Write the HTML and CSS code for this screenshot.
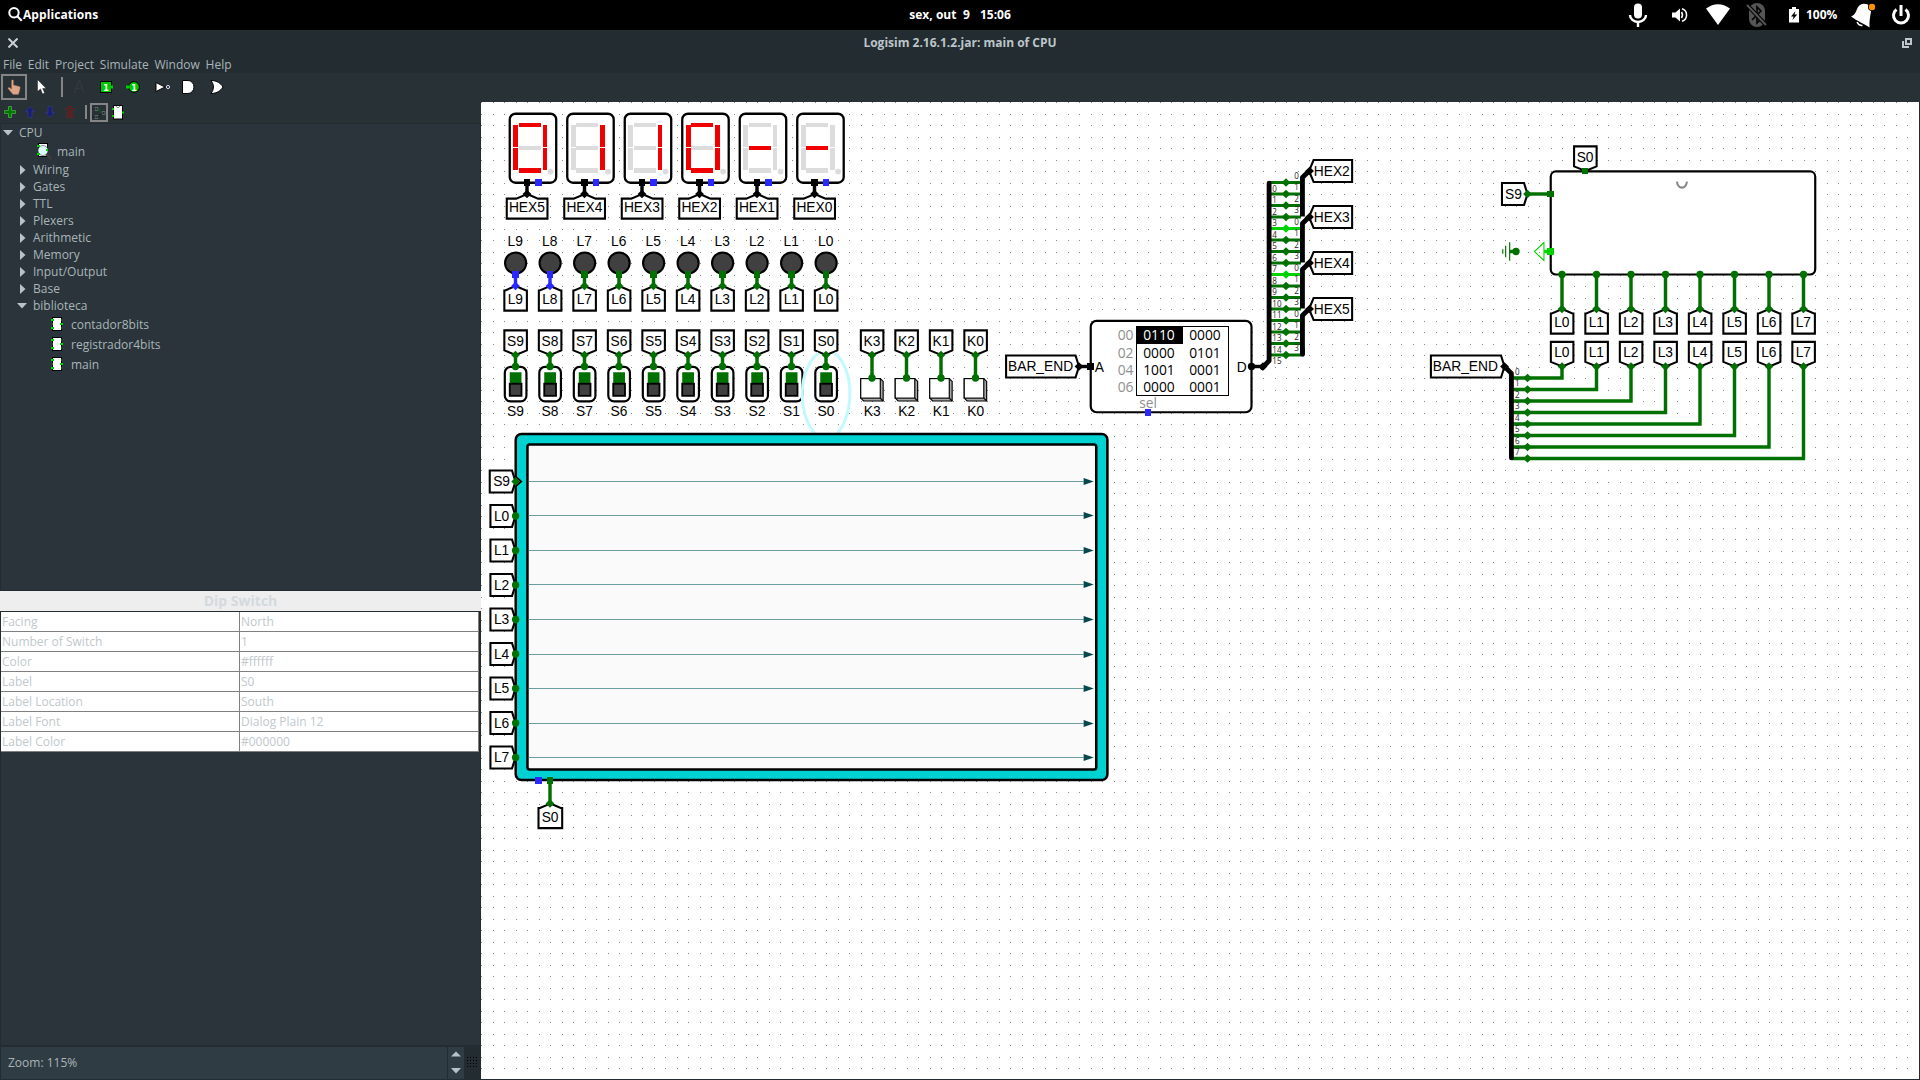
FILE: index.html
```html
<!DOCTYPE html>
<html lang="pt-BR">
<head>
<meta charset="utf-8">
<title>Logisim 2.16.1.2.jar: main of CPU</title>
<link rel="stylesheet" href="styles.css">
</head>
<body>
<svg class="defs" aria-hidden="true">
  <symbol id="chip" viewBox="0 0 12 16">
    <rect x="1.5" y="1.5" width="9" height="13" fill="#fff" stroke="#000"/>
    <path d="M0 4h3M0 12h3M9 8h3" stroke="#00d200" stroke-width="2"/>
    <path d="M1 8h1M10 4h1M10 12h1" stroke="#007000" stroke-width="2"/>
  </symbol>
  <symbol id="closed" viewBox="0 0 6 10"><path d="M0 0l5.5 5-5.500 5z" fill="#b8c2c8"/></symbol>
  <symbol id="open" viewBox="0 0 10 6"><path d="M0 0h10l-5 5.500z" fill="#b8c2c8"/></symbol>
</svg>

<header class="panel">
  <div class="panel-left">
    <svg width="15" height="15" viewBox="0 0 15 15"><circle cx="6" cy="5.800" r="4.700" fill="none" stroke="#fff" stroke-width="2"/><path d="M9.300 9.300l4.500 4.500" stroke="#fff" stroke-width="2.200"/></svg>
    <span>Applications</span>
  </div>
  <div class="panel-clock">sex, out&nbsp; 9 &nbsp; 15:06</div>
  <div class="panel-right">
    <svg class="i-mic" width="20" height="26" viewBox="0 0 20 26" fill="none" stroke="#fff"><rect x="6" y="1.500" width="8" height="15" rx="4" fill="#fff" stroke="none"/><path d="M2 13a8 7 0 0 0 16 0M10 20v5" stroke-width="2.400"/></svg>
    <svg class="i-vol" width="16" height="16" viewBox="0 0 16 16" fill="none" stroke="#fff" stroke-width="1.500"><path d="M0 5.500h3.500L8 1.500v13L3.500 10.500H0z" fill="#fff" stroke="none"/><path d="M9.500 5q2 3 0 6" /><path d="M10 1.800a6.500 6.500 0 0 1 0 12.400"/></svg>
    <svg class="i-wifi" width="24" height="22" viewBox="0 0 24 22"><path d="M0 4.500Q12-4 24 4.500L12 21z" fill="#fff"/></svg>
    <svg class="i-bt" width="22" height="26" viewBox="0 0 22 26"><rect x="3" y="1" width="16" height="24" rx="8" fill="#555"/><path d="M6 18l9-9-4-4v16l4-4-9-9" fill="none" stroke="#000" stroke-width="1.600"/><path d="M1 3l19 20" stroke="#000" stroke-width="4"/><path d="M1 3l19 20" stroke="#555" stroke-width="2"/></svg>
    <svg class="i-bat" width="10" height="16" viewBox="0 0 10 16"><path d="M0 2h3V0h4v2h3v13.500H0z" fill="#fff"/><path d="M6.500 4L2 9.500h2.500L3.500 13 8.300 7.500H5.500z" fill="#000"/></svg>
    <span class="bat">100%</span>
    <svg class="i-bell" width="26" height="26" viewBox="0 0 26 26"><path d="M0 14.500c6-2 5-9 9-11.500 3-2 7-1.500 10 1 3 4-1 9-.5 21.500C14 22 6 19 0 14.500z" fill="#fff"/><path d="M6 20q2 4 5.500 3.500" fill="none" stroke="#fff" stroke-width="1.500"/><circle cx="21" cy="5" r="4" fill="#000"/><circle cx="21" cy="5" r="3.200" fill="#ff9100"/></svg>
    <svg class="i-pow" width="20" height="22" viewBox="0 0 20 22" fill="none" stroke="#fff" stroke-width="3"><path d="M5.500 5.500a7.500 7.500 0 1 0 9 0M10 1v11"/></svg>
  </div>
</header>

<div class="titlebar">
  <svg width="10" height="10" viewBox="0 0 10 10"><path d="M.5.5l9 9M9.500.5l-9 9" stroke="#c9d1d5" stroke-width="2"/></svg>
  <h1>Logisim 2.16.1.2.jar: main of CPU</h1>
  <svg width="10" height="10" viewBox="0 0 10 10" fill="none" stroke="#c0c8cc" stroke-width="2" shape-rendering="crispEdges"><path d="M4 1h5v5H4zM1 3v6h6"/></svg>
</div>
<nav class="menu"><span>File</span><span>Edit</span><span>Project</span><span>Simulate</span><span>Window</span><span>Help</span></nav>

<div class="tools">
  <span class="tool on"><svg width="14" height="16" viewBox="0 0 14 16"><path d="M4.500 10V1.500q1-1.500 2 0V6l6 1.500.8 1-1 4.500-1 2.500H6L1 9.500q0-1.500 1.500-1z" fill="#dda588" stroke="#8e6350" stroke-width=".5"/></svg></span>
  <svg class="t-arrow" width="10" height="16" viewBox="0 0 10 16"><path d="M.5.500v12l3-2.500 2 5 2.200-1-2-4.500h3.500z" fill="#fff" stroke="#000" stroke-width=".4"/></svg>
  <i class="sep"></i>
  <b class="t-a">A</b>
  <svg class="t-in" width="14" height="12" viewBox="0 0 14 12"><rect x=".5" y=".5" width="11" height="11" fill="#00c800" stroke="#000"/><path d="M11 6h2" stroke="#00d200" stroke-width="3"/><text x="6" y="9.500" class="pin">1</text></svg>
  <svg class="t-out" width="14" height="12" viewBox="0 0 14 12"><circle cx="8" cy="6" r="5.400" fill="#00c800" stroke="#000"/><path d="M0 6h3" stroke="#00d200" stroke-width="3"/><text x="8" y="9.500" class="pin">1</text></svg>
  <svg class="t-not" width="16" height="10" viewBox="0 0 16 10"><path d="M1 .5l9 4.500-9 4.500z" fill="#fff" stroke="#000"/><circle cx="13" cy="5" r="1.600" fill="#273136" stroke="#dde"/></svg>
  <svg class="t-and" width="13" height="14" viewBox="0 0 13 14"><path d="M.5.500H6a6 6.500 0 0 1 0 13H.5z" fill="#fff" stroke="#000"/></svg>
  <svg class="t-or" width="14" height="14" viewBox="0 0 14 14"><path d="M1 .5c6 0 10 3 12 6.500-2 3.500-6 6.500-12 6.500q5-6.500 0-13z" fill="#fff" stroke="#000"/></svg>
</div>

<main class="work">
  <aside class="side">
    <div class="tools2">
      <svg width="12" height="12" viewBox="0 0 12 12"><path d="M4.500.5h3v4h4v3h-4v4h-3v-4h-4v-3h4z" fill="#007800" stroke="#3b9a3b"/></svg>
      <svg width="10" height="12" viewBox="0 0 10 12"><path d="M5 .5l4.500 5H7v6H3v-6H.5z" fill="#1c1c7c" stroke="#2c3870"/></svg>
      <svg width="10" height="12" viewBox="0 0 10 12"><path d="M5 11.500l4.500-5H7v-6H3v6H.5z" fill="#1c1c7c" stroke="#2c3870"/></svg>
      <svg width="10" height="12" viewBox="0 0 10 12" fill="none" stroke="#642020"><path d="M0 2.500h10M3.500 2V.5h3V2M1.500 3v8.500h7V3M3.500 4v7M5 4v7M6.500 4v7"/></svg>
      <i class="sep2"></i>
      <span class="view on"><svg width="14" height="14" viewBox="0 0 14 14" fill="none" stroke="#111"><path d="M3 1.500h3v3H3zM3 9.500h3v3H3zM10 5.500h3v3h-3z" stroke="#59646a"/><path d="M6 3h2v3h2" stroke="#0a5a10"/><path d="M0 3h3M0 11h3M6 11h2V8h2" stroke-dasharray="1 1"/></svg></span>
      <svg class="chip2" width="12" height="15" viewBox="0 0 12 15"><rect x="1.500" y=".5" width="9" height="13.500" fill="#fff" stroke="#000"/><path d="M4 1q2 3.500 4 0" fill="none" stroke="#888"/><path d="M0 4h2M0 11h2M10 7.500h2" stroke="#00d200" stroke-width="2"/></svg>
    </div>
    <div class="tree">
      <div class="row l0"><svg width="10" height="6"><use href="#open"/></svg><span>CPU</span></div>
      <div class="row circ c1"><svg width="17" height="18" viewBox="0 0 17 18"><rect x="2.500" y="1.500" width="9" height="13" fill="#fff" stroke="#000"/><path d="M10 12l5.500 5" stroke="#3c3c3c" stroke-width="2.500"/><circle cx="7" cy="8.500" r="5" fill="#dcfafa" stroke="#444" stroke-width=".6"/><path d="M1 4h3M1 12h3M10 8h2" stroke="#00d200" stroke-width="2"/></svg><span>main</span></div>
      <div class="row l1"><svg width="6" height="10"><use href="#closed"/></svg><span>Wiring</span></div>
      <div class="row l1"><svg width="6" height="10"><use href="#closed"/></svg><span>Gates</span></div>
      <div class="row l1"><svg width="6" height="10"><use href="#closed"/></svg><span>TTL</span></div>
      <div class="row l1"><svg width="6" height="10"><use href="#closed"/></svg><span>Plexers</span></div>
      <div class="row l1"><svg width="6" height="10"><use href="#closed"/></svg><span>Arithmetic</span></div>
      <div class="row l1"><svg width="6" height="10"><use href="#closed"/></svg><span>Memory</span></div>
      <div class="row l1"><svg width="6" height="10"><use href="#closed"/></svg><span>Input/Output</span></div>
      <div class="row l1"><svg width="6" height="10"><use href="#closed"/></svg><span>Base</span></div>
      <div class="row l1 exp"><svg width="10" height="6"><use href="#open"/></svg><span>biblioteca</span></div>
      <div class="row circ c2"><svg width="12" height="16"><use href="#chip"/></svg><span>contador8bits</span></div>
      <div class="row circ c2"><svg width="12" height="16"><use href="#chip"/></svg><span>registrador4bits</span></div>
      <div class="row circ c2"><svg width="12" height="16"><use href="#chip"/></svg><span>main</span></div>
    </div>
    <h2>Dip Switch</h2>
    <div class="attrs">
      <span>Facing</span><span>North</span>
      <span>Number of Switch</span><span>1</span>
      <span>Color</span><span>#ffffff</span>
      <span>Label</span><span>S0</span>
      <span>Label Location</span><span>South</span>
      <span>Label Font</span><span>Dialog Plain 12</span>
      <span>Label Color</span><span>#000000</span>
    </div>
    <div class="fill"></div>
    <div class="zoom">
      <div class="zoom-value">Zoom: 115%</div>
      <div class="spin"><svg width="10" height="6" viewBox="0 0 10 6"><path d="M0 5.500h10L5 .5z" fill="#b8c2c8"/></svg><svg width="10" height="6"><use href="#open"/></svg></div>
      <div class="grip"></div>
    </div>
  </aside>
  <section class="canvas">
    <svg width="1438" height="977">
      <g id="grid"></g>
      <g id="circuit" class="circuit" transform="scale(1.15)"></g>
    </svg>
  </section>
</main>
<script src="circuit.js"></script>
</body>
</html>
```
FILE: styles.css
```css
* { box-sizing: border-box; }
body {
  margin: 0;
  width: 1920px;
  height: 1080px;
  display: flex;
  flex-direction: column;
  overflow: hidden;
  background: #222c31;
  color: #a9b4b9;
  font: 12px/17px "Open Sans", "Noto Sans", sans-serif;
}
svg { display: block; flex: none; }
.defs { display: none; }

.panel {
  height: 30px;
  flex: none;
  display: grid;
  grid-template-columns: 1fr auto 1fr;
  align-items: center;
  background: #000;
  color: #fff;
  font-weight: 700;
  font-size: 12px;
  padding-bottom: 1px;
}
.panel-left { display: flex; align-items: center; padding-left: 8px; letter-spacing: .08px; }
.panel-clock { word-spacing: .2px; }
.panel-right { display: flex; align-items: center; justify-content: flex-end; padding-right: 9px; }
.i-vol { margin-left: 24.5px; }
.i-wifi { margin-left: 18px; }
.i-bt { margin-left: 16px; }
.i-bat { margin-left: 21px; }
.bat { margin-left: 7px; width: 32px; }
.i-bell { margin-left: 13px; }
.i-pow { margin-left: 14px; }

.titlebar {
  height: 26px;
  flex: none;
  display: flex;
  align-items: center;
  justify-content: space-between;
  padding: 0 8px 1px;
}
.titlebar h1 { margin: 0; font-size: 12px; font-weight: 700; color: #bcc5c9; }
.menu { height: 17px; flex: none; display: flex; gap: 5.8px; padding-left: 3px; }

.tools {
  height: 29px;
  flex: none;
  display: flex;
  align-items: center;
  background: #273136;
  padding: 0 0 1px 1px;
}
.tool { width: 26px; height: 26px; border: 2px solid #858585; display: flex; align-items: center; justify-content: center; }
.t-arrow { margin-left: 10px; }
.sep { width: 2px; height: 20px; margin-left: 14px; background: #858585; }
.t-a { margin-left: 8px; width: 16px; text-align: center; font: 17px/20px "DejaVu Sans", sans-serif; color: #33383b; }
.t-in { margin-left: 13px; }
.t-out { margin-left: 12px; }
.t-not { margin-left: 15px; }
.t-and { margin-left: 11px; }
.t-or { margin-left: 15px; }
.pin { font: bold 8px "DejaVu Sans", sans-serif; fill: #fff; text-anchor: middle; }

.work { height: 978px; display: grid; grid-template-columns: 481px 1438px; }
.side { display: flex; flex-direction: column; background: #222c31; }
.tools2 { height: 21px; flex: none; display: flex; align-items: center; gap: 10px; padding: 0 0 1px 4px; background: #273136; }
.tools2 svg:nth-child(2) { margin-left: -1px; }
.sep2 { width: 2px; height: 14px; background: #858585; }
.view { width: 18px; height: 19px; border: 2px solid #858585; margin-left: -7px; }
.view svg { margin: 1px 0 0; }
.tools2 .chip2 { margin-left: -6px; }

.tree { height: 467px; flex: none; margin: 0 1px; background: #2a343a; border-top: 1px solid #222c31; }
.row { height: 17px; display: flex; align-items: center; }
.row.l0 { padding-left: 2px; gap: 6px; }
.row.l1 { padding-left: 19px; gap: 7px; }
.row.exp { padding-left: 16px; gap: 6px; }
.row.circ { height: 20px; }
.row.c1 { padding-left: 35px; gap: 4px; }
.row.c2 { padding-left: 50px; gap: 8px; }

.side h2 { margin: 1px 0 0; height: 20px; flex: none; background: #eee; color: #d3dade; font-size: 14px; line-height: 20px; font-weight: 700; text-align: center; }
.attrs { flex: none; margin-top: 1px; width: 478px; margin-left: 1px; display: grid; grid-template-columns: 239px 239px; }
.attrs span { height: 20px; background: #fff; color: #c0c8cc; border: solid #808080; border-width: 0 1px 1px 0; padding-left: 1px; line-height: 20px; }
.fill { flex: 1; margin: 0 1px; background: #2a343a; }
.zoom { height: 35px; flex: none; display: flex; padding: 2px 0 1px; }
.zoom-value { width: 446px; background: #303c43; padding: 0 7px; margin-left: 1px; line-height: 31px; }
.spin { width: 16px; margin-left: 1px; background: #303c43; display: flex; flex-direction: column; align-items: center; justify-content: space-between; padding: 4px 0 5px; }
.grip { width: 12px; height: 12px; margin: 10px 0 0 3px; background: conic-gradient(from 270deg at 1px 1px, #000 90deg, transparent 0) 0 0 / 3px 3px; }

.canvas { height: 977px; background: #fff; }
.circuit text { font-family: "Liberation Sans", Arial, sans-serif; font-size: 12px; fill: #000; }
.circuit text.mem { font-family: "Open Sans", "Noto Sans", sans-serif; }
.circuit text.gray { fill: #909090; }
.circuit text.bit { font-family: "Open Sans", "Noto Sans", sans-serif; font-size: 7px; fill: #222; }
.circuit text.inv { fill: #fff; }
.snap { shape-rendering: crispEdges; }
```
FILE: circuit.js
```js
// Circuit coordinates are in grid units: one grid step is 10 units.
const out = [];
const GREEN = '#007000', BRIGHT = '#00d200', BLUE = '#2828ff', BLACK = '#000';

const path = (d, stroke, width, fill = 'none', extra = '') =>
  out.push(`<path d="${d}" stroke="${stroke}" stroke-width="${width}" fill="${fill}" ${extra}/>`);
const rect = (x, y, w, h, fill, stroke = 'none', sw = 0, r = 0, extra = '') =>
  out.push(`<rect x="${x}" y="${y}" width="${w}" height="${h}" rx="${r}" fill="${fill}" stroke="${stroke}" stroke-width="${sw}" ${extra}/>`);
const text = (x, y, s, cls = '', anchor = 'middle') =>
  out.push(`<text x="${x - .2}" y="${y - .1}" class="${cls}" text-anchor="${anchor}">${s}</text>`);
const wire = (d, c = GREEN) => path(d, c, 3, 'none', 'stroke-linecap="square"');
const dot = (x, y, c = GREEN) => out.push(`<circle cx="${x}" cy="${y}" r="3.2" fill="${c}"/>`);
const diamond = (x, y, c = GREEN) => path(`M${x - 3.8} ${y}l3.800-3.800 3.800 3.800-3.800 3.800z`, 'none', 0, c);
const port = (x, y, c = GREEN) => rect(x - 2.8, y - 2.8, 5.6, 5.6, c, 'none', 0, 0, 'class="snap"');

// Tunnel labels, named by the side their tip points to.
function tunnelUp(x, y, s, hw = 9.8) {
  const k = Math.min(hw, 9.5);
  path(`M${x} ${y}L${x + k} ${y + 4}H${x + hw}V${y + 21.4}H${x - hw}V${y + 4}H${x - k}z`, BLACK, 1.8, '#fff');
  text(x, y + 16, s);
}
function tunnelDown(x, y, s) {
  path(`M${x} ${y}l9.800-4V${y - 21.4}h-19.600V${y - 4}z`, BLACK, 1.8, '#fff');
  text(x, y - 8, s);
}
function tunnelRight(x, y, s, w = 22, tx = 12) {
  path(`M${x} ${y}L${x - 3} ${y - 9.5}H${x - w}V${y + 9.5}H${x - 3}z`, BLACK, 1.8, '#fff');
  text(x - tx, y + 4.2, s);
}
function tunnelLeft(x, y, s) {
  path(`M${x} ${y}L${x + 4} ${y - 9.5}H${x + 37.5}V${y + 9.5}H${x + 4}z`, BLACK, 1.8, '#fff');
  text(x + 20, y + 4.2, s);
}

// Background grid: one pixel at every 11.5px step
let dots = '';
for (let y = 0; y < 85; y++)
  for (let x = 0; x < 126; x++)
    dots += `M${Math.round(x * 11.5)} ${Math.round(y * 11.5)}h1v1h-1z`;
document.getElementById('grid').innerHTML = `<path class="snap" fill="#888" d="${dots}"/>`;

// Seven-segment displays: segment order top, upper left, upper right, middle, lower left, lower right, bottom
const SEGS = [[8, 8, 19, 4], [3, 10, 4.2, 19.5], [28.5, 10, 4, 19.5], [8, 28, 19, 4], [3, 30, 4.2, 19.5], [28.5, 30, 4, 19.5], [8, 47.500, 19, 4]];
[['HEX5', '1110111'], ['HEX4', '0010010'], ['HEX3', '0010010'], ['HEX2', '1110111'], ['HEX1', '0001000'], ['HEX0', '0001000']].forEach(([name, lit], i) => {
  const px = 40 + i * 50, bx = px - 15;
  const on = lit === '0010010' ? [2, 5] : [...lit].flatMap((c, k) => c === '1' ? [k] : []);
  rect(bx, 10.2, 40.4, 60, '#fff', BLACK, 2, 5);
  SEGS.forEach((s, k) => rect(bx + s[0], 10 + s[1], s[2], s[3], on.includes(k) ? '#f00000' : '#dcdcdc', 'none', 0, 0, 'class="snap"'));
  out.push(`<circle cx="${bx + 35.5}" cy="60.500" r="2.500" fill="#dcdcdc"/>`);
  tunnelUp(px + .1, 80, name, 17.7);
  wire(`M${px} 70V80`, BLACK);
  diamond(px, 80, BLACK);
  port(px, 70, BLACK);
  port(px + 10, 70, BLUE);
});

// LEDs L9..L0 and dip switches S9..S0
for (let i = 0; i < 10; i++) {
  const x = 30 + i * 30, n = 9 - i, c = i < 2 ? BLUE : GREEN;
  text(x, 125.200, 'L' + n);
  out.push(`<circle cx="${x + .1}" cy="140" r="9.200" fill="#404040" stroke="#000" stroke-width="1.800"/>`);
  tunnelUp(x + .1, 160, 'L' + n);
  wire(`M${x} 150V160`, c);
  port(x, 150, c);
  diamond(x, 160, c);

  tunnelDown(x + .1, 220, 'S' + n);
  rect(x - 9.3, 230.400, 18.800, 30, '#fff', BLACK, 1.9, 5);
  rect(x - 5, 235, 10.200, 11, GREEN);
  rect(x - 5, 245, 10.200, 10.500, '#404040', BLACK, 1.6);
  wire(`M${x} 220V230`);
  diamond(x, 220);
  dot(x, 230);
  text(x + .1, 273, 'S' + n);
}

// Push buttons K3..K0
for (let i = 0; i < 4; i++) {
  const x = 340 + i * 30, n = 3 - i;
  path(`M${x - 9.8} 240.500h17l2.500 2.500v17h-17l-2.500-2.500z`, BLACK, 1, '#a8a8a8');
  rect(x - 9.8, 240.500, 17, 17, '#fff', BLACK, 1);
  path(`M${x + 7.2} 257.500l2.500 2.500`, BLACK, 1);
  tunnelDown(x + .1, 220, 'K' + n);
  wire(`M${x} 220V240`);
  diamond(x, 220);
  dot(x, 240);
  text(x + .4, 273.400, 'K' + n);
}

// Halo round the selected switch
path('M307.500 218.300C325 232 325 273 308.500 289.500M293.500 218.300C275 232 275 273 291.500 289.500', '#c4f8ff', 2.6);

// Waveform viewer
rect(30.200, 288.600, 514.500, 301, '#00d2d2', BLACK, 2.2, 5);
rect(40.400, 297.800, 494.600, 282.600, '#fafafa', BLACK, 2.2, 2);
['S9', 'L0', 'L1', 'L2', 'L3', 'L4', 'L5', 'L6', 'L7'].forEach((s, i) => {
  const y = 330 + i * 30;
  // Centre each trace on a whole pixel row so that all are equally thin
  const ty = (Math.floor(y * 1.15) + .5) / 1.15;
  path(`M41.500 ${ty}H524`, '#6a9ca0', 1 / 1.15);
  path(`M524 ${ty - 3}l8.800 3-8.800 3z`, 'none', 0, '#05484c');
  tunnelRight(30, y, s, i ? 21.800 : 22.400, 11.9);
  if (!i) path('M30 325.500l5 4.500-5 4.500', BLACK, 1.5);
  i ? dot(30.100, y) : diamond(30.100, y);
});
tunnelUp(60.300, 610, 'S0', 10.300);
wire('M60 590V610');
diamond(60, 610);
port(60, 590);
port(50, 590, BLUE);

// ROM
rect(530.200, 190.400, 139.800, 79.400, '#fff', BLACK, 1.9, 5);
tunnelRight(520, 230, 'BAR_END', 63.400, 33.200);
wire('M520 230H530', BLACK);
diamond(520, 230, BLACK);
port(530, 230, BLACK);
text(533.800, 234.600, 'A', '', 'start');
text(666, 234.600, 'D', '', 'end');
rect(570, 195.300, 80, 60, '#fff', BLACK, .9, 0, 'class="snap"');
rect(570, 195.300, 40, 15, '#000', 'none', 0, 0, 'class="snap"');
[['00', '0110', '0000'], ['02', '0000', '0101'], ['04', '1001', '0001'], ['06', '0000', '0001']].forEach((r, i) => {
  const y = 207.300 + i * 15;
  text(567.500, y, r[0], 'mem gray', 'end');
  text(589.700, y, r[1], i ? 'mem' : 'mem inv');
  text(629.700, y, r[2], 'mem');
});
text(580.300, 266, 'sel', 'mem gray');
port(580, 270, BLUE);

// Splitters between the ROM output and the displays
for (let i = 0; i < 16; i++) {
  const y = 70 + i * 10, c = i === 4 || i === 8 ? BRIGHT : GREEN;
  path(`M686 ${y}H713`, c, 2.6);
  diamond(700, y, c);
  text(688.300, y + 8.300, i, 'bit', 'start');
  text(711.300, y - 3.300, i % 4, 'bit', 'end');
}
wire('M670 230H680', BLACK);
path('M679.500 231L685.300 225V70.500', BLACK, 4.2, 'none', 'stroke-linecap="round" stroke-linejoin="round"');
dot(670, 230, BLACK);
diamond(680, 230, BLACK);
['HEX2', 'HEX3', 'HEX4', 'HEX5'].forEach((s, i) => {
  const y = 60 + i * 40;
  tunnelLeft(720, y, s);
  path(`M720 ${y}L714.300 ${y + 5.700}V${y + 39.5}`, BLACK, 4.2, 'none', 'stroke-linejoin="round"');
  diamond(720.500, y, BLACK);
});
path('M714.300 215V219.500', BLACK, 4.2, 'none', 'stroke-linecap="round"');

// Subcircuit with its ports
rect(930.200, 60.400, 230, 89.600, '#fff', BLACK, 1.9, 4.500);
path('M1039.900 69.200C1041.200 76.200 1047.400 76.200 1048.700 69.200', '#888', 1.8);
tunnelDown(960.300, 60, 'S0');
port(960, 60);
tunnelRight(910, 80, 'S9', 22.200);
wire('M910 80H930');
diamond(910, 80);
port(930, 80);
path('M888.500 128v4M891 125v10M894.500 122v16', GREEN, 1);
wire('M896 130H899');
dot(900, 130);
path('M924.300 122.200v15.600L916 130z', BRIGHT, .9);
wire('M926 130H930', BRIGHT);
port(930, 130, BRIGHT);
for (let i = 0; i < 8; i++) {
  const x = 940 + i * 30, y = 240 + i * 10;
  tunnelUp(x + .1, 180, 'L' + i);
  wire(`M${x} 150V180`);
  dot(x, 150);
  diamond(x, 180);
  tunnelDown(x + .1, 230, 'L' + i);
  wire(`M${x} 230V${y}H898`);
  diamond(x, 230);
  diamond(910, y);
  text(899.300, y - 2.900, i, 'bit', 'start');
}
tunnelRight(890, 230, 'BAR_END', 64, 33.800);
path('M890 230L896 236V309.500', BLACK, 4.2, 'none', 'stroke-linecap="round" stroke-linejoin="round"');
diamond(890, 230, BLACK);

document.getElementById('circuit').innerHTML = out.join('');
```
